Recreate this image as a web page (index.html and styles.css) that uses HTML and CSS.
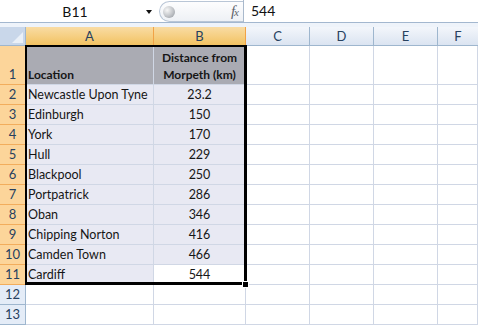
FILE: index.html
```html
<!DOCTYPE html>
<html lang="en">
<head>
    <meta charset="UTF-8">
    <title>Distances from Morpeth</title>
    <link rel="stylesheet" href="styles.css">
</head>
<body>
    <div class="formula-bar">
        <div class="name-box">
            <span class="name">B11</span>
            <span class="drop"></span>
        </div>
        <div class="fx-box">
            <span class="orb"></span>
            <span class="fx">f<i>x</i></span>
        </div>
        <div class="formula">544</div>
    </div>
    <div class="bar-gap"></div>

    <div class="sheet">
        <div class="corner"><span class="tri"></span></div>
        <div class="ch on">A</div>
        <div class="ch on">B</div>
        <div class="ch">C</div>
        <div class="ch">D</div>
        <div class="ch">E</div>
        <div class="ch last">F</div>

        <div class="rh on">1</div>
        <div class="c head bold">Location</div>
        <div class="c head bold num">Distance from<br>Morpeth (km)</div>
        <div class="c"></div><div class="c"></div><div class="c"></div><div class="c"></div>

        <div class="rh on">2</div>
        <div class="c sel">Newcastle Upon Tyne</div>
        <div class="c sel num">23.2</div>
        <div class="c"></div><div class="c"></div><div class="c"></div><div class="c"></div>

        <div class="rh on">3</div>
        <div class="c sel">Edinburgh</div>
        <div class="c sel num">150</div>
        <div class="c"></div><div class="c"></div><div class="c"></div><div class="c"></div>

        <div class="rh on">4</div>
        <div class="c sel">York</div>
        <div class="c sel num">170</div>
        <div class="c"></div><div class="c"></div><div class="c"></div><div class="c"></div>

        <div class="rh on">5</div>
        <div class="c sel">Hull</div>
        <div class="c sel num">229</div>
        <div class="c"></div><div class="c"></div><div class="c"></div><div class="c"></div>

        <div class="rh on">6</div>
        <div class="c sel">Blackpool</div>
        <div class="c sel num">250</div>
        <div class="c"></div><div class="c"></div><div class="c"></div><div class="c"></div>

        <div class="rh on">7</div>
        <div class="c sel">Portpatrick</div>
        <div class="c sel num">286</div>
        <div class="c"></div><div class="c"></div><div class="c"></div><div class="c"></div>

        <div class="rh on">8</div>
        <div class="c sel">Oban</div>
        <div class="c sel num">346</div>
        <div class="c"></div><div class="c"></div><div class="c"></div><div class="c"></div>

        <div class="rh on">9</div>
        <div class="c sel">Chipping Norton</div>
        <div class="c sel num">416</div>
        <div class="c"></div><div class="c"></div><div class="c"></div><div class="c"></div>

        <div class="rh on">10</div>
        <div class="c sel">Camden Town</div>
        <div class="c sel num">466</div>
        <div class="c"></div><div class="c"></div><div class="c"></div><div class="c"></div>

        <div class="rh on">11</div>
        <div class="c sel">Cardiff</div>
        <div class="c num">544</div>
        <div class="c"></div><div class="c"></div><div class="c"></div><div class="c"></div>

        <div class="rh">12</div>
        <div class="c"></div><div class="c"></div><div class="c"></div><div class="c"></div><div class="c"></div><div class="c"></div>

        <div class="rh">13</div>
        <div class="c"></div><div class="c"></div><div class="c"></div><div class="c"></div><div class="c"></div><div class="c"></div>

        <div class="selection"></div>
        <div class="handle"></div>
    </div>
</body>
</html>
```

FILE: styles.css
```css
body {
    margin: 0;
    background-color: #fff;
    overflow: hidden;
}
* {
    box-sizing: border-box;
    font-family: Lato, "Liberation Sans", sans-serif;
}

/* formula bar */
.formula-bar {
    display: flex;
    height: 23px;
    border-bottom: 1px solid #a3b7cf;
    background-color: #fff;
}
.name-box {
    display: flex;
    align-items: center;
    width: 156px;
    padding-right: 4px;
}
.name {
    flex: 1;
    text-align: center;
    font-size: 14px;
    color: #111;
    padding-left: 4px;
}
.drop {
    width: 0;
    height: 0;
    border-left: 3.5px solid transparent;
    border-right: 3.5px solid transparent;
    border-top: 4px solid #111;
    margin-top: 2px;
}
.fx-box {
    display: flex;
    align-items: center;
    justify-content: space-between;
    width: 84px;
    margin-left: 3px;
    margin-top: 1px;
    height: 21px;
    padding: 0 5px 0 3px;
    border: 1px solid #b9c6d6;
    border-right: none;
    border-radius: 11px 0 0 11px;
    background: linear-gradient(#fdfdfe, #eef1f5);
}
.orb {
    width: 12px;
    height: 12px;
    border-radius: 50%;
    background: radial-gradient(circle at 35% 35%, #f6f6f6, #c0c3c7 55%, #8c9198);
}
.fx {
    font-family: "Liberation Serif", serif;
    font-style: italic;
    font-size: 15px;
    color: #5e636b;
    letter-spacing: -1px;
}
.fx i {
    font-family: "Liberation Serif", serif;
    font-size: 11px;
}
.formula {
    flex: 1;
    border-left: 1px solid #a9b9cc;
    padding-left: 7px;
    font-size: 14px;
    line-height: 22px;
    color: #111;
}
.bar-gap {
    height: 4px;
    background-color: #eef3fa;
}

/* grid */
.sheet {
    position: relative;
    display: grid;
    grid-template-columns: 26px 128px 92px 64px 64px 64px 1fr;
    grid-template-rows: 19px 39px repeat(12, 20px);
    font-size: 12.5px;
}
.corner {
    position: relative;
    background-color: #c9d7ea;
    border-right: 1px solid #9eb6ce;
    border-bottom: 1px solid #9eb6ce;
}
.tri {
    position: absolute;
    right: 2px;
    bottom: 2px;
    width: 0;
    height: 0;
    border-left: 11px solid transparent;
    border-bottom: 11px solid #eaf0f8;
}
.ch {
    display: flex;
    align-items: center;
    justify-content: center;
    font-size: 13px;
    color: #27415f;
    background: linear-gradient(#f3f6fb, #dbe4f1);
    border-right: 1px solid #9eb6ce;
    border-bottom: 1px solid #9eb6ce;
}
.ch.last {
    border-right: none;
}
.ch.on {
    background: linear-gradient(#f9dca4, #f2c262);
    border-right-color: #f1a246;
    border-bottom-color: #f29436;
}
.rh {
    display: flex;
    align-items: flex-end;
    justify-content: center;
    padding-bottom: 2px;
    font-size: 13px;
    color: #27415f;
    background-color: #e4ecf7;
    border-right: 1px solid #9eb6ce;
    border-bottom: 1px solid #9eb6ce;
}
.rh.on {
    background-color: #fcd59a;
    border-right-color: #f29436;
    border-bottom-color: #f2ad5c;
}
.c {
    display: flex;
    align-items: flex-end;
    padding: 0 2px 2px 2px;
    color: #161616;
    white-space: nowrap;
    border-right: 1px solid #d0d7e5;
    border-bottom: 1px solid #d0d7e5;
}
.c.sel {
    background-color: #e8e9f3;
}
.c.head {
    background-color: #aaabb3;
    line-height: 17px;
    padding-bottom: 1px;
}
.bold {
    font-weight: bold;
    font-size: 12px;
}
.num {
    justify-content: center;
    text-align: center;
}

/* selection frame over A1:B11 */
.selection {
    position: absolute;
    left: 25px;
    top: 18px;
    width: 222px;
    height: 240px;
    border-style: solid;
    border-color: #000;
    border-width: 2px 3px 3px 2px;
    pointer-events: none;
}
.handle {
    position: absolute;
    left: 242px;
    top: 254px;
    width: 7px;
    height: 7px;
    background-color: #000;
    border: 1px solid #fff;
}
```
